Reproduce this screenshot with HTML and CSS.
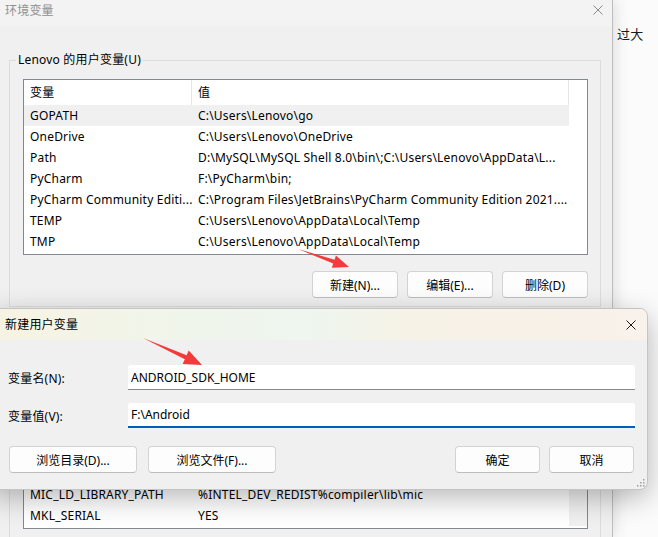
FILE: index.html
```html
<!DOCTYPE html>
<html lang="zh-CN">
<head>
    <meta charset="UTF-8">
    <meta name="viewport" content="width=device-width, initial-scale=1.0">
    <title>环境变量</title>
    <link rel="stylesheet" href="styles.css">
</head>
<body>
<div class="desk">
    <div class="envwin">
        <div class="titlebar">
            <span class="title">环境变量</span>
            <svg class="close" width="10" height="10" viewBox="0 0 10 10"><path d="M0.5 0.5L9.5 9.5M9.5 0.5L0.5 9.5"/></svg>
        </div>
        <fieldset class="group">
            <legend>Lenovo 的用户变量(U)</legend>
            <div class="list">
                <div class="list-main">
                    <div class="row head"><span>变量</span><span>值</span></div>
                    <div class="row sel"><span>GOPATH</span><span>C:\Users\Lenovo\go</span></div>
                    <div class="row"><span>OneDrive</span><span>C:\Users\Lenovo\OneDrive</span></div>
                    <div class="row"><span>Path</span><span>D:\MySQL\MySQL Shell 8.0\bin\;C:\Users\Lenovo\AppData\L...</span></div>
                    <div class="row"><span>PyCharm</span><span>F:\PyCharm\bin;</span></div>
                    <div class="row"><span>PyCharm Community Editi...</span><span>C:\Program Files\JetBrains\PyCharm Community Edition 2021....</span></div>
                    <div class="row"><span>TEMP</span><span>C:\Users\Lenovo\AppData\Local\Temp</span></div>
                    <div class="row"><span>TMP</span><span>C:\Users\Lenovo\AppData\Local\Temp</span></div>
                </div>
                <div class="list-scroll"></div>
            </div>
            <div class="btns">
                <button class="btn">新建(N)...</button>
                <button class="btn">编辑(E)...</button>
                <button class="btn">删除(D)</button>
            </div>
        </fieldset>
        <!-- system variables: only the last rows show below the dialog -->
        <div class="group sys">
            <div class="list sys-list">
                <div class="list-main">
                    <div class="row"><span>MIC_LD_LIBRARY_PATH</span><span>%INTEL_DEV_REDIST%compiler\lib\mic</span></div>
                    <div class="row"><span>MKL_SERIAL</span><span>YES</span></div>
                </div>
                <div class="list-scroll grey"></div>
            </div>
        </div>
    </div>
    <div class="behind"><span>过大</span></div>

    <div class="dlg">
        <div class="dlg-title">
            <span>新建用户变量</span>
            <svg class="close dark" width="10" height="10" viewBox="0 0 10 10"><path d="M0.5 0.5L9.5 9.5M9.5 0.5L0.5 9.5"/></svg>
        </div>
        <div class="dlg-body">
            <div class="fields">
                <div class="field"><label for="vname">变量名(N):</label><input id="vname" class="inp" type="text" value="ANDROID_SDK_HOME" readonly></div>
                <div class="field"><label for="vval">变量值(V):</label><input id="vval" class="inp focus" type="text" value="F:\Android" readonly></div>
            </div>
            <div class="dlg-btns">
                <button class="btn wide">浏览目录(D)...</button>
                <button class="btn wide">浏览文件(F)...</button>
                <button class="btn push">确定</button>
                <button class="btn">取消</button>
            </div>
        </div>
        <svg class="grip" width="9" height="9" viewBox="0 0 9 9">
            <rect x="7" y="1" width="1.5" height="1.5"/><rect x="4" y="4" width="1.5" height="1.5"/><rect x="7" y="4" width="1.5" height="1.5"/>
            <rect x="1" y="7" width="1.5" height="1.5"/><rect x="4" y="7" width="1.5" height="1.5"/><rect x="7" y="7" width="1.5" height="1.5"/>
        </svg>
    </div>

    <svg class="marks" width="658" height="537" viewBox="0 0 658 537">
        <polygon points="298,249 334.6,259.8 335.9,255.6 349,267 331.9,267.8 333.2,263.6"/>
        <polygon points="143,338 186.6,355.3 188.7,350.6 202,365 182.7,364 184.8,359.3"/>
    </svg>
</div>
</body>
</html>
```

FILE: styles.css
```css
*, *:before, *:after {box-sizing: border-box;}
* {margin:0;padding:0;outline: none;}
html, body {background-color: #fbfbfb;color: #000;font-family: "Noto Sans", "Noto Sans CJK SC", sans-serif;font-size: 12px;letter-spacing: .2px;}
.desk {position: relative;display: flex;width: 658px;height: 537px;overflow: hidden;}
.envwin {position: relative;z-index: 1;flex: none;width: 613px;background: #f0f0f0;border-right: 1px solid #bdbdbd;box-shadow: 2px 0 14px rgba(0,0,0,.12);}
.titlebar {display: flex;justify-content: space-between;align-items: flex-start;height: 26px;padding: 3px 9px 0 5px;background: #f3f3f3;}
.title {line-height: 16px;color: #8f8f8f;}
.close {margin-top: 2px;}
.close path {stroke: #8a8a8a;stroke-width: 1;fill: none;}
.close.dark path {stroke: #1a1a1a;}
.group {margin: 26px 11px 0 9px;border: 1px solid #dcdcdc;}
.group legend {margin-left: 6px;padding: 0 2px;line-height: 16px;}
.group.sys {margin-top: 20px;border-bottom: none;height: 240px;}
.list {display: flex;margin: 11px 12px 0 13px;padding-bottom: 2px;background: #fff;border: 1px solid #828790;}
.list.sys-list {padding-top: 144px;}
.list-main {flex: 1;min-width: 0;}
.list-scroll {width: 18px;flex: none;}
.list-scroll.grey {background: #f0f0f0;}
.row {display: flex;height: 21px;line-height: 21px;white-space: nowrap;}
.row span {overflow: hidden;padding-left: 6px;}
.row span:first-child {flex: none;width: 168px;}
.row span:last-child {flex: 1;}
.row.head {height: 25px;line-height: 25px;}
.row.head span {border-right: 1px solid #e5e5e5;}
.row.sel {background: #f0f0f0;}
.btns {display: flex;justify-content: flex-end;gap: 9px;margin: 16px 12px 0 0;padding-bottom: 8px;}
.btn {width: 86px;height: 27px;background: #fdfdfd;border: 1px solid #d3d3d3;border-bottom-color: #bdbdbd;border-radius: 4px;font: inherit;color: #000;}
.behind {flex: 1;padding: 26px 0 0 4px;font-size: 13px;line-height: 17px;color: #1a1a1a;}
.dlg {position: absolute;z-index: 2;left: -10px;top: 308px;width: 658px;background: #f0f0f0;border: 1px solid #c4c4c4;border-radius: 8px;box-shadow: 0 8px 28px rgba(0,0,0,.28);overflow: hidden;}
.dlg-title {display: flex;justify-content: space-between;align-items: center;height: 31px;padding: 0 11px 0 14px;background: linear-gradient(90deg, #f7f3e3 0%, #f1f5ea 25%, #eef6ef 48%, #f7f2e6 65%, #f9f1eb 100%);line-height: 16px;}
.dlg-title .close {margin-top: 0;}
.dlg-body {padding: 25px 12px 16px 17px;}
.fields {display: flex;flex-direction: column;gap: 13px;}
.field {display: flex;align-items: center;height: 25px;}
.field label {flex: none;width: 120px;}
.inp {flex: 1;height: 25px;padding: 0 3px;background: #fff;border: none;border-bottom: 1px solid #8a8a8a;border-radius: 3px 3px 0 0;font: inherit;color: #000;}
.inp.focus {border-bottom: 2px solid #005fb8;}
.dlg-btns {display: flex;gap: 9px;margin-top: 18px;padding: 0 1px 0 1px;}
.dlg-btns .btn {width: 85px;}
.dlg-btns .btn.wide {width: 128px;}
.btn.wide + .btn.wide {margin-left: 2px;}
.btn.push {margin-left: auto;}
.grip {position: absolute;right: 2px;bottom: 2px;}
.grip rect {fill: #a0a0a0;}
.marks {position: absolute;z-index: 3;left: 0;top: 0;pointer-events: none;}
.marks polygon {fill: #f43a3a;}
```
